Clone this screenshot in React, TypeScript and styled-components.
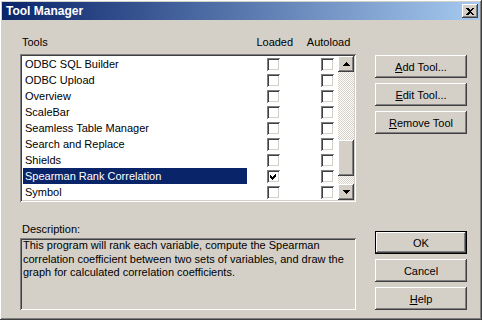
import * as React from 'react';
import styled, { createGlobalStyle, css } from 'styled-components';

const face = '#d4d0c8';

const raised = css`
  background: ${face};
  box-shadow: inset -1px -1px #404040, inset 1px 1px #ffffff, inset -2px -2px #808080, inset 2px 2px ${face};
`;

const sunken = css`
  box-shadow: inset 1px 1px #808080, inset -1px -1px #ffffff, inset 2px 2px #404040, inset -2px -2px ${face};
`;

const GlobalStyle = createGlobalStyle`
  html, body {
    margin: 0;
    padding: 0;
    background: ${face};
  }
  * {
    box-sizing: border-box;
  }
`;

const Window = styled.div`
  width: 482px;
  height: 320px;
  padding: 2px;
  display: flex;
  flex-direction: column;
  font-family: "Liberation Sans", Arial, sans-serif;
  font-size: 11px;
  color: #000000;
  ${raised};
`;

const TitleBar = styled.div`
  height: 18px;
  display: flex;
  align-items: center;
  justify-content: space-between;
  padding: 0 2px 0 4px;
  background: linear-gradient(to right, #0a246a, #a6caf0);
  color: #ffffff;
  font-weight: bold;
  font-size: 12px;
`;

const CloseButton = styled.div`
  width: 16px;
  height: 14px;
  display: flex;
  align-items: center;
  justify-content: center;
  ${raised};
`;

const Body = styled.div`
  flex: 1;
  display: flex;
  gap: 19px;
  padding: 14px 0 8px 18px;
`;

const LeftColumn = styled.div`
  width: 336px;
  display: flex;
  flex-direction: column;
`;

const HeaderRow = styled.div`
  height: 20px;
  display: flex;
  line-height: 16px;
`;

const HeaderCell = styled.div<{ $width: number; $align?: string }>`
  width: ${p => p.$width}px;
  text-align: ${p => p.$align || 'center'};
  padding-left: ${p => (p.$align === 'left' ? 2 : 0)}px;
`;

const ListBox = styled.div`
  height: 148px;
  display: flex;
  padding: 2px;
  background: #ffffff;
  ${sunken};
`;

const Rows = styled.div`
  flex: 1;
  overflow: hidden;
`;

const Row = styled.div`
  height: 16px;
  display: flex;
  align-items: center;
  padding-left: 1px;
`;

const ToolName = styled.div<{ $selected?: boolean }>`
  width: 224px;
  height: 16px;
  line-height: 16px;
  padding-left: 2px;
  white-space: nowrap;
  background: ${p => (p.$selected ? '#0a246a' : 'transparent')};
  color: ${p => (p.$selected ? '#ffffff' : '#000000')};
`;

const CheckBox = styled.div<{ $gap: number }>`
  width: 13px;
  height: 13px;
  margin-left: ${p => p.$gap}px;
  background: #ffffff;
  ${sunken};
  display: flex;
`;

const ScrollBar = styled.div`
  width: 16px;
  display: flex;
  flex-direction: column;
`;

const ArrowButton = styled.div`
  width: 16px;
  height: 16px;
  display: flex;
  align-items: center;
  justify-content: center;
  ${raised};
`;

const Track = styled.div<{ $thumbTop: number }>`
  flex: 1;
  padding-top: ${p => p.$thumbTop}px;
  background: repeating-conic-gradient(#ffffff 0 25%, ${face} 0 50%) 0 0 / 2px 2px;
`;

const Thumb = styled.div`
  width: 16px;
  height: 36px;
  ${raised};
`;

const Label = styled.div`
  margin-top: 19px;
  line-height: 16px;
  padding-left: 2px;
`;

const Description = styled.div`
  margin-top: 1px;
  height: 72px;
  padding: 1px 3px 0 3px;
  line-height: 13.5px;
  white-space: pre-line;
  ${sunken};
`;

const RightColumn = styled.div`
  width: 92px;
  margin-top: 21px;
  display: flex;
  flex-direction: column;
  justify-content: space-between;
`;

const ButtonGroup = styled.div`
  display: flex;
  flex-direction: column;
  gap: 5px;
`;

const Button = styled.div<{ $default?: boolean }>`
  height: 23px;
  display: flex;
  align-items: center;
  justify-content: center;
  ${raised};
  ${p =>
    p.$default &&
    css`
      box-shadow: inset 0 0 0 1px #000000, inset -2px -2px #404040, inset 2px 2px #ffffff, inset -3px -3px #808080;
    `}
`;

const Key = styled.span`
  text-decoration: underline;
`;

const Arrow = ({ down }: { down?: boolean }) => (
  <svg width="7" height="4" viewBox="0 0 7 4" shapeRendering="crispEdges">
    <path d={down ? 'M0 0h7L3.5 4z' : 'M3.5 0L7 4H0z'} fill="#000" />
  </svg>
);

const CheckMark = () => (
  <svg width="13" height="13" viewBox="0 0 13 13" shapeRendering="crispEdges">
    <path d="M3 5 5 7 9 3v3L5 10 3 8z" fill="#000" />
  </svg>
);

const tools = [
  { name: 'ODBC SQL Builder' },
  { name: 'ODBC Upload' },
  { name: 'Overview' },
  { name: 'ScaleBar' },
  { name: 'Seamless Table Manager' },
  { name: 'Search and Replace' },
  { name: 'Shields' },
  { name: 'Spearman Rank Correlation', selected: true, loaded: true },
  { name: 'Symbol' },
];

const App: React.FC = () => (
  <>
    <GlobalStyle />
    <Window>
      <TitleBar>
        <span>Tool Manager</span>
        <CloseButton>
          <svg width="8" height="7" viewBox="0 0 8 7" shapeRendering="crispEdges">
            <path d="M0 0h2l2 2 2-2h2L5 3.5 8 7H6L4 5 2 7H0l3-3.5z" fill="#000" />
          </svg>
        </CloseButton>
      </TitleBar>
      <Body>
        <LeftColumn>
          <HeaderRow>
            <HeaderCell $width={229} $align="left">Tools</HeaderCell>
            <HeaderCell $width={53}>Loaded</HeaderCell>
            <HeaderCell $width={55}>Autoload</HeaderCell>
          </HeaderRow>
          <ListBox>
            <Rows>
              {tools.map(tool => (
                <Row key={tool.name}>
                  <ToolName $selected={tool.selected}>{tool.name}</ToolName>
                  <CheckBox $gap={20}>{tool.loaded && <CheckMark />}</CheckBox>
                  <CheckBox $gap={41} />
                </Row>
              ))}
            </Rows>
            <ScrollBar>
              <ArrowButton><Arrow /></ArrowButton>
              <Track $thumbTop={68}>
                <Thumb />
              </Track>
              <ArrowButton><Arrow down /></ArrowButton>
            </ScrollBar>
          </ListBox>
          <Label>Description:</Label>
          <Description>
            {'This program will rank each variable, compute the Spearman\ncorrelation coefficient between two sets of variables, and draw the\ngraph for calculated correlation coefficients.'}
          </Description>
        </LeftColumn>
        <RightColumn>
          <ButtonGroup>
            <Button><span><Key>A</Key>dd Tool...</span></Button>
            <Button><span><Key>E</Key>dit Tool...</span></Button>
            <Button><span><Key>R</Key>emove Tool</span></Button>
          </ButtonGroup>
          <ButtonGroup>
            <Button $default>OK</Button>
            <Button>Cancel</Button>
            <Button><span><Key>H</Key>elp</span></Button>
          </ButtonGroup>
        </RightColumn>
      </Body>
    </Window>
  </>
);

export default App;
